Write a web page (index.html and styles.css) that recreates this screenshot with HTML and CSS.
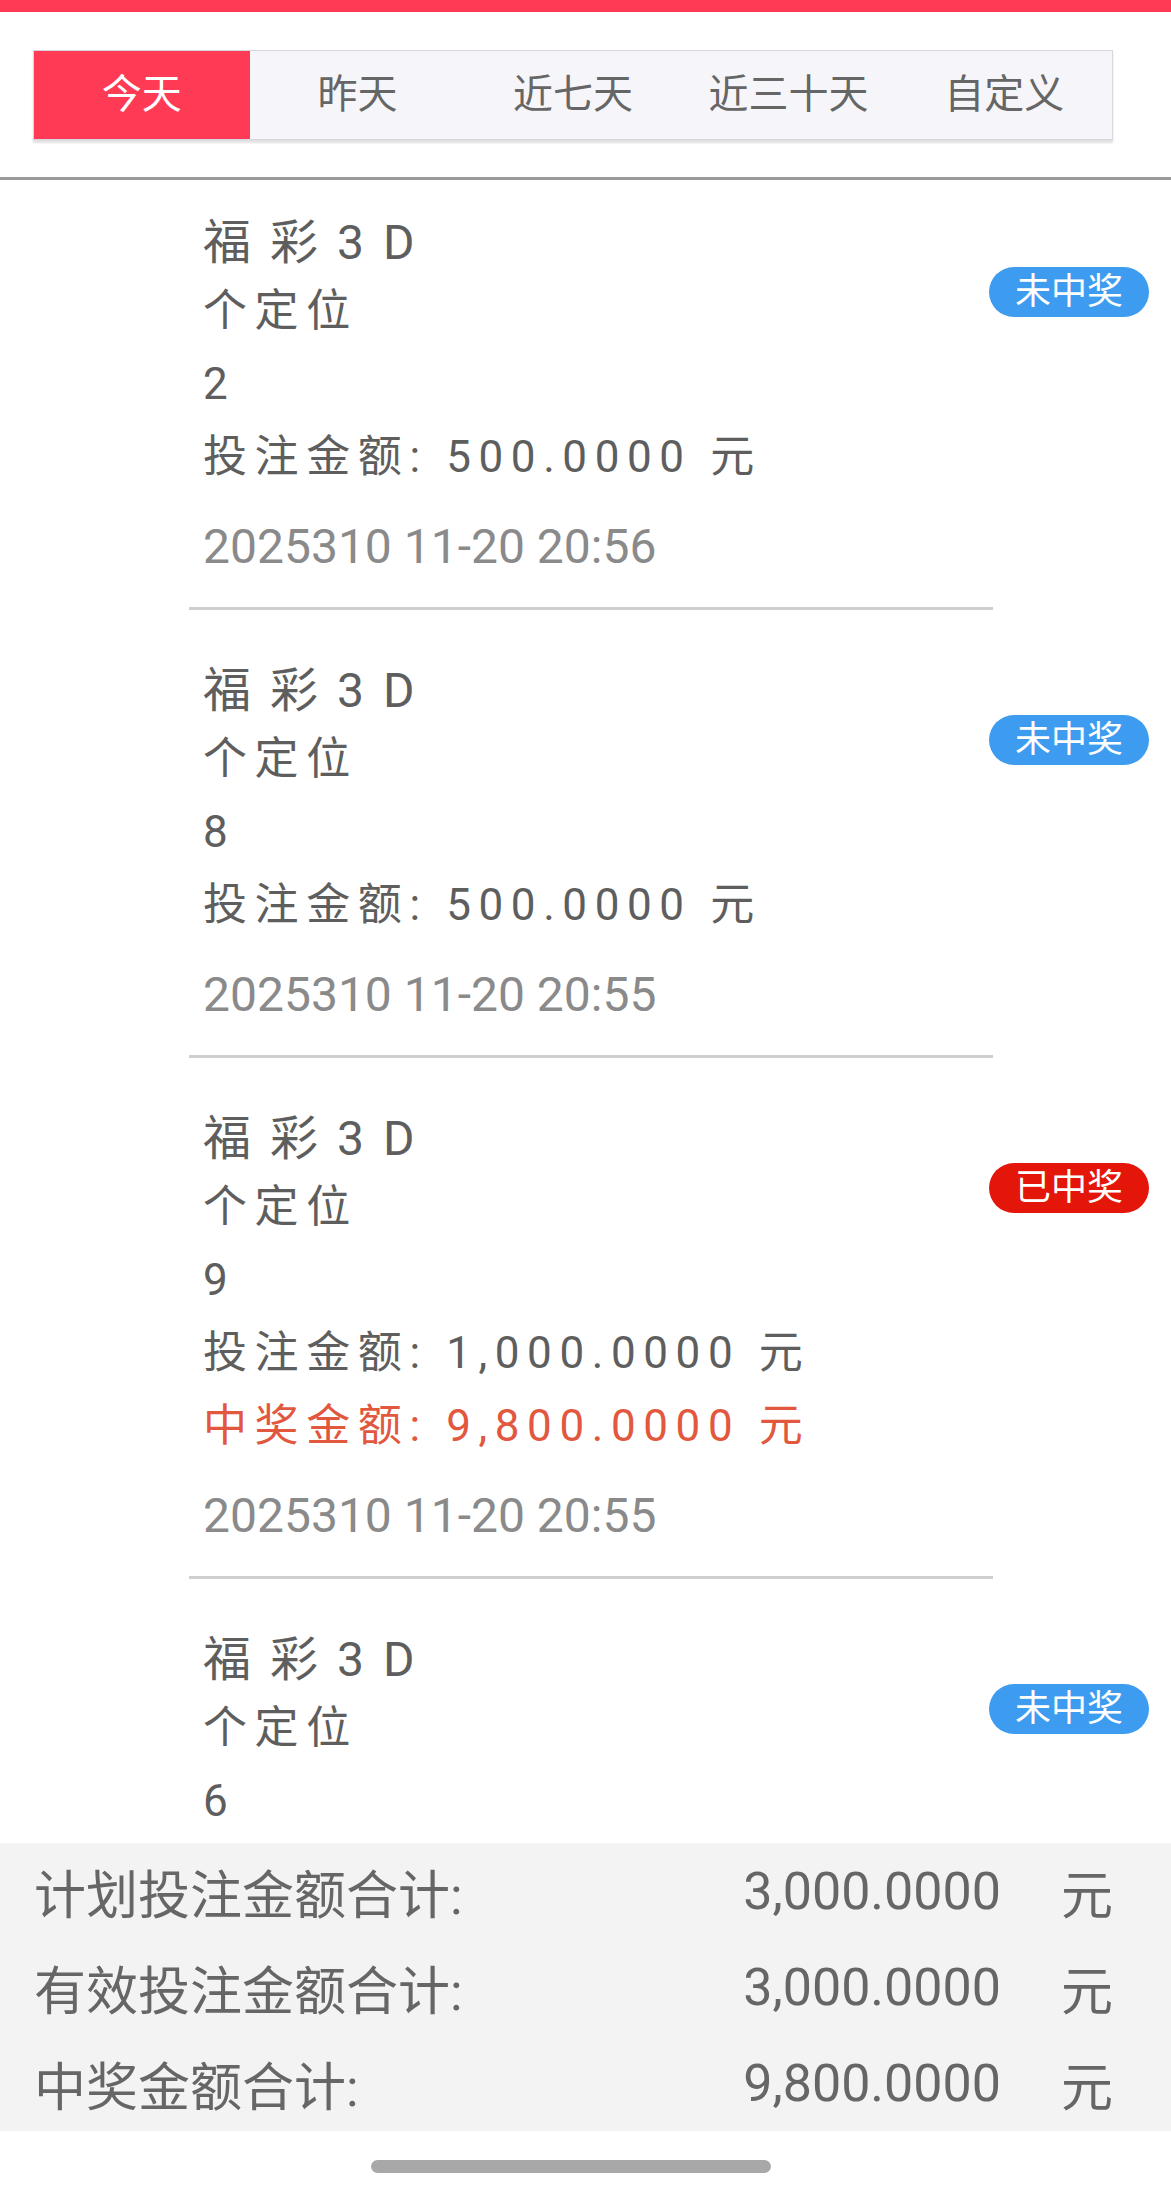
FILE: index.html
```html
<!DOCTYPE html>
<html lang="zh-CN">
<head>
    <meta charset="UTF-8">
    <meta name="viewport" content="width=device-width, initial-scale=1.0">
    <title>投注记录</title>
    <link rel="stylesheet" href="styles.css">
</head>
<body>
    <div class="topbar"></div>

    <div class="tabs-wrap">
        <div class="tabs">
            <div class="tab active">今天</div>
            <div class="tab">昨天</div>
            <div class="tab">近七天</div>
            <div class="tab">近三十天</div>
            <div class="tab">自定义</div>
        </div>
    </div>
    <div class="sep"></div>

    <div class="list">
        <div class="item">
            <div class="info">
                <div class="title">福彩3D</div>
                <div class="line">个定位</div>
                <div class="line">2</div>
                <div class="line">投注金额: 500.0000 元</div>
                <div class="date">2025310 11-20 20:56</div>
            </div>
            <div class="badge lose">未中奖</div>
        </div>

        <div class="item">
            <div class="info">
                <div class="title">福彩3D</div>
                <div class="line">个定位</div>
                <div class="line">8</div>
                <div class="line">投注金额: 500.0000 元</div>
                <div class="date">2025310 11-20 20:55</div>
            </div>
            <div class="badge lose">未中奖</div>
        </div>

        <div class="item">
            <div class="info">
                <div class="title">福彩3D</div>
                <div class="line">个定位</div>
                <div class="line">9</div>
                <div class="line">投注金额: 1,000.0000 元</div>
                <div class="line win">中奖金额: 9,800.0000 元</div>
                <div class="date">2025310 11-20 20:55</div>
            </div>
            <div class="badge won">已中奖</div>
        </div>

        <div class="item">
            <div class="info">
                <div class="title">福彩3D</div>
                <div class="line">个定位</div>
                <div class="line">6</div>
            </div>
            <div class="badge lose">未中奖</div>
        </div>
    </div>

    <div class="summary">
        <div class="sum-row">
            <span class="sum-label">计划投注金额合计:</span>
            <span class="sum-value">3,000.0000</span>
            <span class="sum-unit">元</span>
        </div>
        <div class="sum-row">
            <span class="sum-label">有效投注金额合计:</span>
            <span class="sum-value">3,000.0000</span>
            <span class="sum-unit">元</span>
        </div>
        <div class="sum-row">
            <span class="sum-label">中奖金额合计:</span>
            <span class="sum-value">9,800.0000</span>
            <span class="sum-unit">元</span>
        </div>
    </div>

    <div class="home-bar">
        <div class="home-pill"></div>
    </div>
</body>
</html>
```

FILE: styles.css
```css
body {
    margin: 0;
    width: 1171px;
    font-family: Roboto, "Noto Sans CJK SC", sans-serif;
    color: #5e5e5e;
    background-color: #fff;
}
.topbar {
    height: 12px;
    background-color: #ff3a55;
}
.tabs-wrap {
    padding: 38px 58px 37px 33px;
}
.tabs {
    display: flex;
    height: 88px;
    border: 1px solid #d6d6de;
    background-color: #f6f6fa;
    box-shadow: 0 3px 2px rgba(0, 0, 0, 0.12);
}
.tab {
    flex: 1;
    text-align: center;
    line-height: 88px;
    font-size: 40px;
    color: #666;
}
.tab.active {
    background-color: #ff3a55;
    color: #fff;
}
.sep {
    height: 3px;
    background-color: #9a9a9a;
}
.list {
    height: 1663px;
    overflow: hidden;
}
.item {
    display: flex;
    align-items: flex-start;
    padding: 48px 22px 0 189px;
}
.item:first-child {
    padding-top: 30px;
}
.info {
    flex: 1;
    padding: 0 0 24px 14px;
    border-bottom: 3px solid #cfcfcf;
}
.title {
    font-size: 48px;
    line-height: 65px;
    letter-spacing: 19px;
}
.line {
    font-size: 44px;
    line-height: 73px;
    letter-spacing: 7.6px;
}
.line.win {
    color: #e2583f;
}
.date {
    margin-top: 16px;
    font-size: 48px;
    line-height: 73px;
    color: #8a8a8a;
}
.badge {
    width: 160px;
    height: 50px;
    margin: 57px 0 0 -4px;
    border-radius: 25px;
    text-align: center;
    line-height: 50px;
    font-size: 36px;
    color: #fff;
}
.badge.lose {
    background-color: #3e9cf0;
}
.badge.won {
    background-color: #e4160a;
}
.summary {
    background-color: #f3f3f3;
}
.sum-row {
    display: flex;
    align-items: center;
    height: 96px;
    padding: 0 58px 0 34px;
    font-size: 52px;
    color: #666;
}
.sum-label {
    flex: 1;
}
.sum-value {
    text-align: right;
}
.sum-unit {
    margin-left: 60px;
}
.home-bar {
    height: 69px;
    padding-top: 29px;
    box-sizing: border-box;
}
.home-pill {
    width: 400px;
    height: 13px;
    margin-left: 371px;
    border-radius: 7px;
    background-color: #a8a8a8;
}
```
